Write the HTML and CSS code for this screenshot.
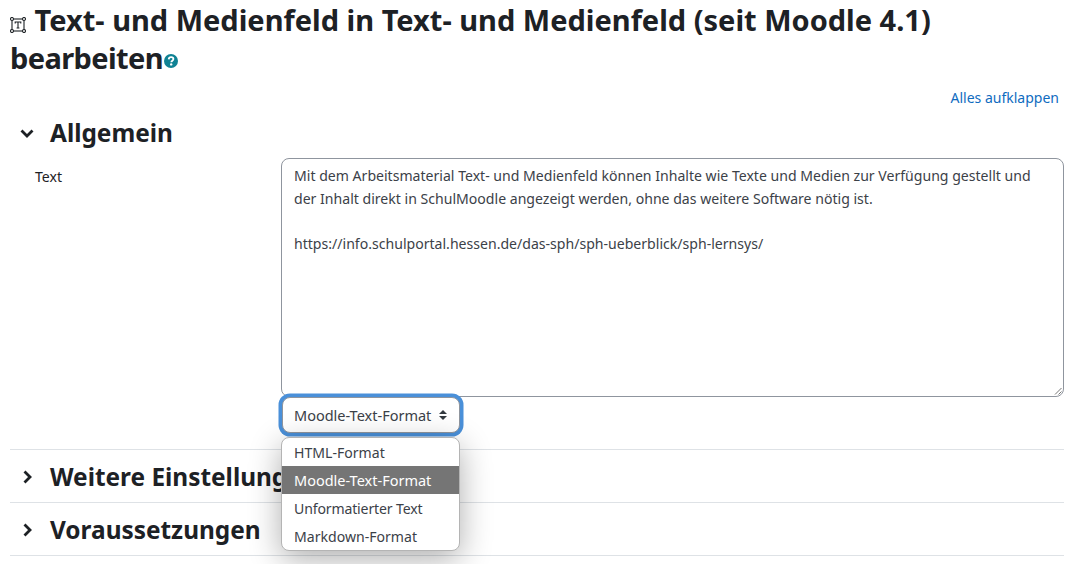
FILE: index.html
```html
<!DOCTYPE html>
<html lang="de">
<head>
<meta charset="utf-8">
<title>Text- und Medienfeld bearbeiten</title>
<link rel="stylesheet" href="styles.css">
</head>
<body>
<h1 class="title">
  <svg class="title-icon" viewBox="0 0 16 16" width="16" height="16" fill="none" stroke="#1d2125" stroke-width="1.1"><rect x="2" y="2" width="12" height="12"/><circle cx="2" cy="2" r="1.5" fill="#fff"/><circle cx="14" cy="2" r="1.5" fill="#fff"/><circle cx="2" cy="14" r="1.5" fill="#fff"/><circle cx="14" cy="14" r="1.5" fill="#fff"/><path d="M5.2 6.600V5h5.600v1.600M8 5v6M6.600 11h2.800"/></svg>
  Text- und Medienfeld in Text- und Medienfeld (seit Moodle 4.1) <span class="tight">bearbeiten</span><svg class="help-icon" viewBox="0 0 14 14" width="14" height="14"><circle cx="7" cy="7" r="7" fill="#0f8294"/><path d="M4.7 5.400C4.800 4 5.800 3.200 7.100 3.200c1.300 0 2.300.8 2.300 1.900 0 1.600-2.100 1.600-2.100 3.100" fill="none" stroke="#fff" stroke-width="1.800"/><circle cx="7.200" cy="10.400" r="1.200" fill="#fff"/></svg>
</h1>
<div class="expand-row"><a class="expand" href="#">Alles aufklappen</a></div>
<section class="section open">
  <h2 class="section-head">
    <svg class="chev" viewBox="0 0 16 16" width="16" height="16"><path d="M2.500 5.500 8 11l5.500-5.500" fill="none" stroke="#1d2125" stroke-width="2.800"/></svg>
    Allgemein
  </h2>
  <div class="field">
    <div class="field-label">Text</div>
    <div class="field-body">
      <div class="textarea">
        <p>Mit dem Arbeitsmaterial Text- und Medienfeld können Inhalte wie Texte und Medien zur Verfügung gestellt und der Inhalt direkt in SchulMoodle angezeigt werden, ohne das weitere Software nötig ist.</p>
        <p class="url">https://info.schulportal.hessen.de/das-sph/sph-ueberblick/sph-lernsys/</p>
        <svg class="grip" viewBox="0 0 8 8" width="8" height="8"><path d="M7.500 1 1 7.500M7.500 4.500 4.500 7.500" stroke="#777" fill="none"/></svg>
      </div>
      <div class="select-wrap">
        <div class="select">Moodle-Text-Format
          <svg class="updown" viewBox="0 0 10 12" width="10" height="12"><path d="M1 5 5 1l4 4zM1 7l4 4 4-4z" fill="#343a40"/></svg>
        </div>
        <ul class="menu">
          <li>HTML-Format</li>
          <li class="active">Moodle-Text-Format</li>
          <li class="narrow">Unformatierter Text</li>
          <li>Markdown-Format</li>
        </ul>
      </div>
    </div>
  </div>
</section>
<section class="section">
  <h2 class="section-head">
    <svg class="chev" viewBox="0 0 16 16" width="16" height="16"><path d="M5.500 2.500 11 8l-5.500 5.500" fill="none" stroke="#1d2125" stroke-width="2.800"/></svg>
    Weitere Einstellungen
  </h2>
</section>
<section class="section last">
  <h2 class="section-head">
    <svg class="chev" viewBox="0 0 16 16" width="16" height="16"><path d="M5.500 2.500 11 8l-5.500 5.500" fill="none" stroke="#1d2125" stroke-width="2.800"/></svg>
    Voraussetzungen
  </h2>
</section>
</body>
</html>
```
FILE: styles.css
```css
* { box-sizing: border-box; }
html, body { height: 564px; overflow: hidden; }
body {
  margin: 0;
  padding: 0 12px 0 10px;
  background: #fff;
  color: #1d2125;
  font-family: "Noto Sans", "Open Sans", sans-serif;
  font-size: 14.08px;
  line-height: 22.5px;
}
.title {
  margin: 0;
  padding: 1px 0 1px;
  font-size: 29px;
  line-height: 38px;
  font-weight: 700;
  color: #1d2125;
  width: 960px;
}
.tight { letter-spacing: -.6px; }
.title-icon { vertical-align: -2px; margin-right: 1px; }
.help-icon { vertical-align: 1.5px; margin-left: 1px; }
.expand-row {
  display: flex;
  justify-content: flex-end;
  padding: 9px 5px 0 0;
  height: 31px;
}
.expand { color: #0f6cbf; text-decoration: none; font-size: 14px; }
.section { border-bottom: 1px solid #dee2e6; position: relative; }
.section-head {
  display: flex;
  align-items: center;
  margin: 0;
  height: 52px;
  padding-top: 2px;
  font-size: 24.4px;
  font-weight: 700;
  color: #1d2125;
}
.chev { margin: 0 15px 0 9px; flex: none; }
.open .section-head { height: 48px; padding-top: 0; }
.field { display: flex; padding-top: 1px; padding-bottom: 16px; }
.field-label { width: 271px; padding-left: 25px; flex: none; padding-top: 8px; }
.field-body { flex: 1; position: relative; }
.textarea {
  height: 239px;
  border: 1px solid #8f959e;
  border-radius: 8px;
  padding: 6px 12px;
  color: #3b4148;
  position: relative;
}
.textarea p { margin: 0; }
.textarea .url { margin-top: 22.5px; }
.grip { position: absolute; right: 1px; bottom: 1px; }
.select-wrap { position: relative; }
.select {
  display: flex;
  align-items: center;
  height: 36px;
  width: 178px;
  margin: 0 0 0 1px;
  padding: 0 11px;
  justify-content: space-between;
  border: 1px solid #8f959e;
  border-radius: 8px;
  box-shadow: 0 0 0 3.5px #4a90d9;
  color: #3b4148;
  background: #fff;
  font-size: 14.5px;
}
.menu {
  position: absolute;
  z-index: 5;
  left: 0;
  top: 40px;
  width: 179px;
  margin: 0;
  padding: 0;
  list-style: none;
  background: #fff;
  border: 1px solid #b4b4b4;
  border-radius: 8px;
  box-shadow: 0 8px 32px rgba(0,0,0,.32);
  overflow: hidden;
  color: #3b4148;
}
.menu li { height: 28px; line-height: 30px; padding-left: 12px; white-space: nowrap; }
.menu .active { background: #757575; color: #fff; font-size: 14.5px; line-height: 28px; }
.menu .narrow { letter-spacing: -.15px; }
```
